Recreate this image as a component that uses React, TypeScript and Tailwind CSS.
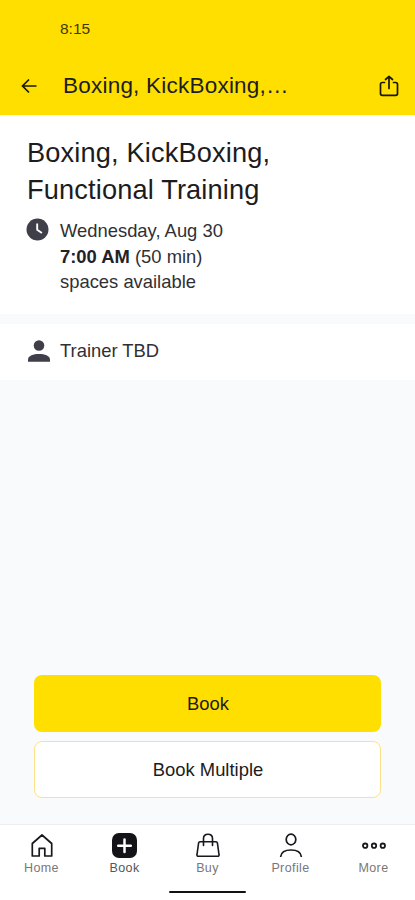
import React from "react";

const HomeIcon: React.FC = () => (
    <svg className="w-6 h-6" viewBox="0 0 24 24" fill="none" stroke="#17171c" strokeWidth="1.7" strokeLinejoin="round">
        <path d="M2.3 10.5 12 2l9.7 8.5V23h-6.9v-7.7H9.2V23H2.3Z" />
    </svg>
);

const BookIcon: React.FC = () => (
    <svg className="w-[25px] h-[25px] -mb-px" viewBox="0 0 25 25">
        <rect width="25" height="25" rx="7" fill="#141418" />
        <path d="M12.5 6.5v12.500M6.200 12.700h12.600" stroke="#fff" strokeWidth="2.5" strokeLinecap="round" />
    </svg>
);

const BagIcon: React.FC = () => (
    <svg className="w-6 h-6" viewBox="0 0 24 24" fill="none" stroke="#17171c" strokeWidth="1.6" strokeLinecap="round" strokeLinejoin="round">
        <path d="M4 8.800h16c.8 0 1.200.4 1.400 1.200L23 21.500c.2 1.200-.4 1.900-1.600 1.900H2.600C1.400 23.400.8 22.700 1 21.500L2.600 10c.2-.8.600-1.200 1.400-1.200Z" />
        <path d="M7.500 12.500V5.500c0-2.600 1.700-4.300 4.500-4.300s4.500 1.700 4.500 4.300v7" />
    </svg>
);

const ProfileIcon: React.FC = () => (
    <svg className="w-6 h-6" viewBox="0 0 24 24" fill="none" stroke="#17171c" strokeWidth="1.7" strokeLinecap="round">
        <ellipse cx="12" cy="6.500" rx="4.800" ry="5.300" />
        <path d="M1.700 23.500c.5-4.200 4.300-6.500 10.300-6.500s9.800 2.300 10.300 6.500" />
    </svg>
);

const MoreIcon: React.FC = () => (
    <svg className="w-6 h-6" viewBox="0 0 24 24" fill="none" stroke="#17171c" strokeWidth="1.8">
        <circle cx="3.2" cy="12.7" r="2.2" />
        <circle cx="12" cy="12.7" r="2.2" />
        <circle cx="20.8" cy="12.7" r="2.2" />
    </svg>
);

const tabs = [
    { label: "Home", icon: <HomeIcon /> },
    { label: "Book", icon: <BookIcon />, active: true },
    { label: "Buy", icon: <BagIcon /> },
    { label: "Profile", icon: <ProfileIcon /> },
    { label: "More", icon: <MoreIcon /> },
];

const App: React.FC = () => {
    return (
        <div className="w-full h-[900px] flex flex-col overflow-hidden bg-[#f8fafc] text-[#1c1c20] font-['Liberation_Sans',Arial,sans-serif]">

            <header className="h-[115px] shrink-0 bg-[#ffdf00]">
                <div className="h-[57px] pl-[60px] pt-[20px] text-[15.5px] leading-[18px] text-[#3f3800]">8:15</div>
                <div className="h-[58px] flex items-center pl-[21px] pr-[16px]">
                    <svg className="w-4 h-4" viewBox="0 0 16 16" fill="none" stroke="#1a1700" strokeWidth="1.7">
                        <path d="M15.500 8H1.500M8 1.500 1.500 8 8 14.500" />
                    </svg>
                    <h1 className="ml-[26px] -mt-px flex-1 text-[22.5px] tracking-[0.22px] whitespace-nowrap">Boxing, KickBoxing,…</h1>
                    <svg className="w-5 h-[22px]" viewBox="0 0 20 22" fill="none" stroke="#1a1700" strokeWidth="1.7" strokeLinecap="round" strokeLinejoin="round">
                        <path d="M5.500 7.500H3.300C2 7.500 1.500 8 1.500 9.300v9.200c0 1.300.5 1.800 1.800 1.800h13.400c1.300 0 1.800-.5 1.800-1.800V9.300c0-1.300-.5-1.800-1.800-1.800H14.500" />
                        <path d="M10 13.500V1.500M6.500 4.500 10 1.500l3.500 3" />
                    </svg>
                </div>
            </header>

            <section className="h-[199px] shrink-0 bg-white pl-[26px] pt-[19px]">
                <h2 className="pl-px text-[27.2px] leading-[37px] tracking-[0.15px]">Boxing, KickBoxing,<br />Functional Training</h2>
                <div className="flex mt-[10px]">
                    <svg className="w-[23px] h-[23px]" viewBox="0 0 22 22">
                        <circle cx="11" cy="11" r="10.500" fill="#3e3f49" />
                        <path d="M10.700 5.300v6l4.500 3" fill="none" stroke="#fff" strokeWidth="1.800" />
                    </svg>
                    <div className="ml-[11px] text-[18.4px] leading-[25.5px] text-[#303034]">
                        <p>Wednesday, Aug 30</p>
                        <p><b className="text-[#222226]">7:00 AM</b> (50 min)</p>
                        <p>spaces available</p>
                    </div>
                </div>
            </section>

            <section className="mt-[10px] h-[56px] shrink-0 bg-white pl-[28px] pb-[3px] flex items-center">
                <svg className="w-[22px] h-[22px]" viewBox="0 0 22 22" fill="#3e3f49">
                    <circle cx="11" cy="5.500" r="5.300" />
                    <path d="M0 21.700v-2.200c0-3.700 5.500-5.500 11-5.500s11 1.800 11 5.500v2.200Z" />
                </svg>
                <span className="ml-[10px] text-[18.4px] text-[#303034]">Trainer TBD</span>
            </section>

            <div className="flex-1 flex flex-col justify-end gap-[9px] px-[34px] pb-[26px] text-[18.4px]">
                <button className="h-[57px] pl-px rounded-lg bg-[#ffdf00]">Book</button>
                <button className="h-[57px] pl-px rounded-lg border-[1.5px] border-[#fbe28a] bg-white">Book Multiple</button>
            </div>

            <nav className="h-[76px] shrink-0 border-t border-[#eceff1] bg-white">
                <div className="grid grid-cols-5 pt-[8px]">
                    {tabs.map((tab) => (
                        <div key={tab.label} className="flex flex-col items-center">
                            {tab.icon}
                            <span className={`mt-[4px] text-[12.5px] leading-[15px] tracking-[0.4px] ${tab.active ? "text-[#55555a]" : "text-[#77777b]"}`}>{tab.label}</span>
                        </div>
                    ))}
                </div>
                <div className="mx-auto mt-[15px] w-[77px] h-[2px] rounded-full bg-[#111]" />
            </nav>

        </div>
    );
};

export default App;
